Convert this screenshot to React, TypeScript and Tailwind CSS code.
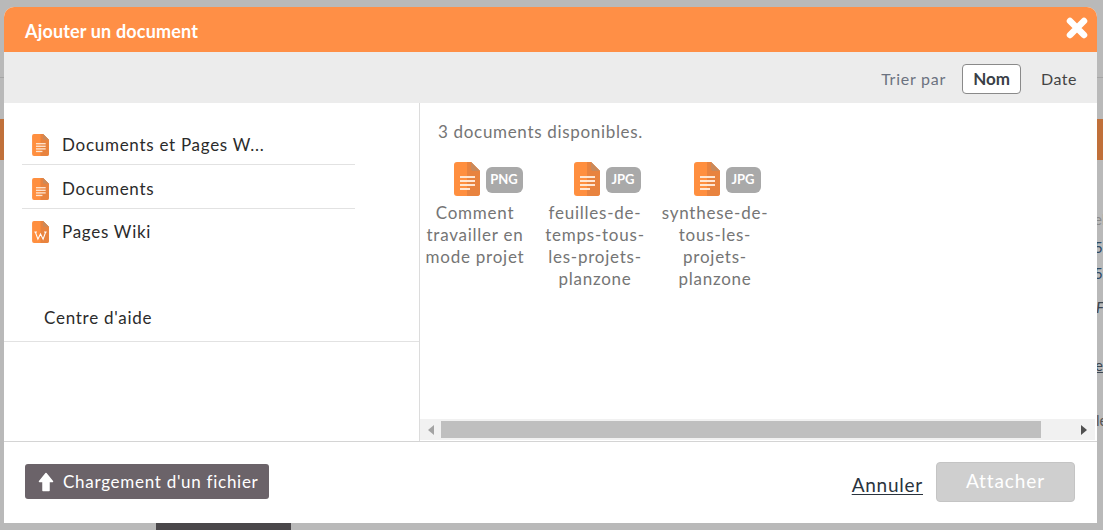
const font = { fontFamily: '"Lato", "Noto Sans", sans-serif' };

function FileIcon({ w = 26, h = 34, glyph = "lines" }: { w?: number; h?: number; glyph?: "lines" | "wiki" }) {
  return (
    <svg width={w} height={h} viewBox="0 0 26 34" className="shrink-0">
      <path d="M3 0H17L26 9V31a3 3 0 0 1-3 3H3a3 3 0 0 1-3-3V3a3 3 0 0 1 3-3Z" fill="#ff8f3f" />
      <path d="M13 0H17L26 9V31a3 3 0 0 1-3 3H13Z" fill="#e8833f" />
      <path d="M17 0L26 9H19a2 2 0 0 1-2-2Z" fill="#c98a5c" />
      {glyph === "lines" ? (
        <g fill="#ffe6d2">
          <rect x="6" y="14" width="15" height="2" />
          <rect x="6" y="18" width="15" height="2" />
          <rect x="6" y="22" width="15" height="2" />
          <rect x="6" y="26" width="10" height="2" />
        </g>
      ) : (
        <path d="M5 17l4 11 4-8 4 8 4-11M3.5 17h4M18.5 17h4" fill="none" stroke="#fff" strokeWidth="1.6" />
      )}
    </svg>
  );
}

function Doc({ ext, lines }: { ext: string; lines: string[] }) {
  return (
    <div className="w-[120px] flex flex-col items-center">
      <div className={`flex items-center gap-[6px] h-[34px] ${ext === "PNG" ? "ml-[26px]" : "ml-[24px]"}`}>
        <FileIcon />
        <span className={`h-[26px] mt-[2px] rounded-[6px] bg-[#a9a9a9] text-white text-[13px] font-bold flex items-center justify-center ${ext === "PNG" ? "w-[37px]" : "w-[35px]"}`}>
          {ext}
        </span>
      </div>
      <div className="mt-[6px] text-[17px] leading-[22px] text-[#757575] text-center tracking-[0.76px]">
        {lines.map((l) => (
          <div key={l} className="whitespace-nowrap">{l}</div>
        ))}
      </div>
    </div>
  );
}

function NavRow({ label, glyph = "lines", line = true }: { label: string; glyph?: "lines" | "wiki"; line?: boolean }) {
  return (
    <div className={`w-[333px] flex items-center pl-[10px] gap-[13px] ${line ? "h-[44px] pt-[4px] border-b border-[#e2e2e2]" : "h-[44px] pt-[2px]"}`}>
      <FileIcon w={17} h={22} glyph={glyph} />
      <span className="text-[17px] text-[#2b2b2b] tracking-[0.72px] whitespace-nowrap">{label}</span>
    </div>
  );
}

export default function App() {
  return (
    <div style={font} className="relative w-[1103px] h-[530px] overflow-hidden bg-[#b9b9b9] pt-[7px] pl-[4px]">
      {/* bits of the page behind the overlay */}
      <div className="absolute left-0 top-[119px] w-[4px] h-[41px] bg-[#c0703a]" />
      <div className="absolute right-0 top-[119px] w-[6px] h-[41px] bg-[#c0703a]" />
      <div className="absolute left-0 top-[77px] w-[4px] h-px bg-[#a5a5a5]" />
      <div className="absolute right-0 top-[77px] w-[6px] h-px bg-[#a5a5a5]" />
      <div className="absolute left-[156px] top-[523px] w-[135px] h-[7px] bg-[#4a474a]" />
      <div className="absolute left-[1094px] top-[210px] text-[15px] leading-[18px] text-[#8a8a8a]">eb</div>
      <div className="absolute left-[1094px] top-[238px] text-[15px] leading-[18px] text-[#2d4a66]">5,</div>
      <div className="absolute left-[1094px] top-[264px] text-[15px] leading-[18px] text-[#2d4a66]">5,</div>
      <div className="absolute left-[1096px] top-[298px] text-[15px] leading-[18px] italic text-[#3a4550]">F</div>
      <div className="absolute left-[1095px] top-[356px] text-[15px] leading-[18px] underline text-[#3a4550]">e</div>
      <div className="absolute left-[1096px] top-[411px] text-[15px] leading-[18px] text-[#555]">le</div>

      <div className="relative w-[1093px] h-[516px] bg-white rounded-t-[10px] flex flex-col">
        <div className="h-[45px] shrink-0 bg-[#ff8f46] rounded-t-[10px] flex items-center justify-between pl-[21px] pr-[9px]">
          <span className="text-[18px] font-bold text-white tracking-[0.16px] mt-[3px]">Ajouter un document</span>
          <svg width="22" height="22" viewBox="0 0 22 22" className="mb-[3px]">
            <path d="M4 4L18 18M18 4L4 18" stroke="#fff" strokeWidth="6.5" strokeLinecap="round" />
          </svg>
        </div>

        <div className="h-[51px] shrink-0 bg-[#ececec] flex items-center justify-end pt-[2px] pr-[20px]">
          <span className="text-[16px] text-[#6b7280] tracking-[0.75px] mr-[16px]">Trier par</span>
          <span className="w-[59px] h-[30px] rounded-[4px] border border-[#8a8a8a] bg-white flex items-center justify-center text-[17px] font-bold text-[#3a3f47]">Nom</span>
          <span className="text-[16px] text-[#444] tracking-[0.5px] ml-[20px]">Date</span>
        </div>

        <div className="h-[338px] shrink-0 flex">
          <div className="w-[416px] shrink-0 border-r border-[#dcdcdc] flex flex-col">
            <div className="pt-[18px] pl-[18px]">
              <NavRow label="Documents et Pages W..." />
              <NavRow label="Documents" />
              <NavRow label="Pages Wiki" glyph="wiki" line={false} />
            </div>
            <div className="mt-[41px] h-[48px] pl-[40px] border-b border-[#e2e2e2] flex items-center text-[17px] text-[#2b2b2b] tracking-[0.75px]">
              Centre d'aide
            </div>
          </div>

          <div className="flex-1 flex flex-col min-w-0">
            <div className="flex-1 pt-[18px]">
              <div className="pl-[18px] text-[17px] leading-[22px] text-[#757575] tracking-[0.68px]">3 documents disponibles.</div>
              <div className="flex mt-[19px] ml-[-5px]">
                <Doc ext="PNG" lines={["Comment", "travailler en", "mode projet"]} />
                <Doc ext="JPG" lines={["feuilles-de-", "temps-tous-", "les-projets-", "planzone"]} />
                <Doc ext="JPG" lines={["synthese-de-", "tous-les-", "projets-", "planzone"]} />
              </div>
            </div>
            <div className="h-[21px] w-[675px] shrink-0 mb-[1px] bg-[#f1f1f1] flex items-center">
              <div className="w-[21px] flex justify-center">
                <div className="w-0 h-0 border-y-[5px] border-y-transparent border-r-[6px] border-r-[#a3a3a3]" />
              </div>
              <div className="w-[600px] h-[17px] bg-[#bfbfbf]" />
              <div className="flex-1 flex justify-end pr-[8px]">
                <div className="w-0 h-0 border-y-[5px] border-y-transparent border-l-[6px] border-l-[#505050]" />
              </div>
            </div>
          </div>
        </div>

        <div className="flex-1 border-t-[1px] border-[#d4d4d4] flex items-center justify-between pl-[21px] pr-[22px] pb-[2px]">
          <button className="w-[244px] h-[35px] rounded-[3px] bg-[#6b6369] text-white text-[17px] flex items-center pl-[13px] gap-[9px] tracking-[0.72px]">
            <svg width="16" height="20" viewBox="0 0 16 20">
              <path d="M8 1.5L14.5 9.5H11V18.5H5V9.5H1.5Z" fill="#fff" stroke="#fff" strokeWidth="1.5" strokeLinejoin="round" />
            </svg>
            Chargement d'un fichier
          </button>
          <div className="flex items-center gap-[13px]">
            <a className="text-[19px] text-[#2a333d] underline underline-offset-2 tracking-[0.75px] mt-[8px]">Annuler</a>
            <button className="w-[139px] h-[40px] rounded-[4px] bg-[#cfcfcf] border border-[#c4c4c4] text-white text-[19px] tracking-[0.9px]">Attacher</button>
          </div>
        </div>
      </div>
    </div>
  );
}
